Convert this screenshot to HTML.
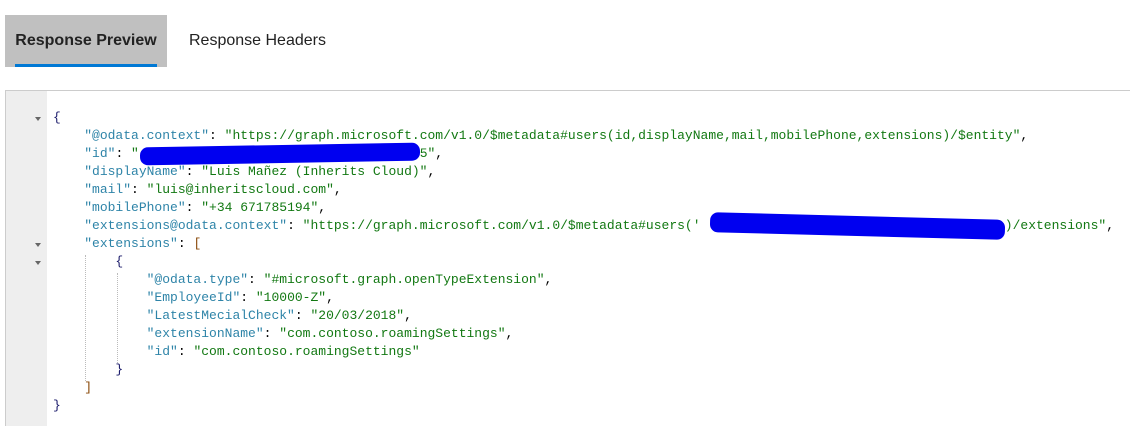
<!DOCTYPE html>
<html><head><meta charset="utf-8"><style>
body{margin:0;width:1130px;height:426px;background:#fff;overflow:hidden;position:relative;font-family:"Liberation Sans",sans-serif}
.tab{position:absolute;top:15px;height:52px;font-size:16px;line-height:52px;color:#222}
.t1{left:5px;width:162px;background:#c0c0c0;text-align:center}
.t1:after{content:"";position:absolute;left:10px;right:10px;bottom:0;height:3px;background:#0078d4}
.t2{left:189px}
.box{position:absolute;left:5px;top:90px;right:0;bottom:0;border-top:1px solid #ccc;border-left:1px solid #ccc}
.gut{position:absolute;left:6px;top:91px;width:41px;bottom:0;background:#eee}
.code{position:absolute;left:53px;top:109px;font-family:"Liberation Mono",monospace;font-size:13px;line-height:18px;white-space:pre;color:#000}
.k{color:#2e84a8}.s{color:#127812}.b{color:#8a4a0a}.c{color:#1a1a6a}
.ar{position:absolute;left:35px;width:0;height:0;border-left:3.5px solid transparent;border-right:3.5px solid transparent;border-top:4px solid #666}
.g{position:absolute;border-left:1px dotted #bbb;width:0}
.bl{position:absolute;background:#0000f0;border-radius:8px}
</style></head><body>
<div class="tab t1"><b style="font-weight:600">Response Preview</b></div>
<div class="tab t2">Response Headers</div>
<div class="box"></div><div class="gut"></div>
<div class="ar" style="top:117px"></div>
<div class="ar" style="top:243px"></div>
<div class="ar" style="top:261px"></div>
<div class="g" style="left:85px;top:255px;height:126px"></div>
<div class="g" style="left:117px;top:273px;height:90px"></div>
<div class="code"><span class="c">{</span>
    <span class="k">"@odata.context"</span>: <span class="s">"https://graph.microsoft.com/v1.0/$metadata#users(id,displayName,mail,mobilePhone,extensions)/$entity"</span>,
    <span class="k">"id"</span>: <span class="s">"                                    5"</span>,
    <span class="k">"displayName"</span>: <span class="s">"Luis Mañez (Inherits Cloud)"</span>,
    <span class="k">"mail"</span>: <span class="s">"luis@inheritscloud.com"</span>,
    <span class="k">"mobilePhone"</span>: <span class="s">"+34 671785194"</span>,
    <span class="k">"extensions@odata.context"</span>: <span class="s">"https://graph.microsoft.com/v1.0/$metadata#users('                                       )/extensions"</span>,
    <span class="k">"extensions"</span>: <span class="b">[</span>
        <span class="c">{</span>
            <span class="k">"@odata.type"</span>: <span class="s">"#microsoft.graph.openTypeExtension"</span>,
            <span class="k">"EmployeeId"</span>: <span class="s">"10000-Z"</span>,
            <span class="k">"LatestMecialCheck"</span>: <span class="s">"20/03/2018"</span>,
            <span class="k">"extensionName"</span>: <span class="s">"com.contoso.roamingSettings"</span>,
            <span class="k">"id"</span>: <span class="s">"com.contoso.roamingSettings"</span>
        <span class="c">}</span>
    <span class="b">]</span>
<span class="c">}</span></div>
<div class="bl" style="left:140px;top:145px;width:280px;height:18px;transform:rotate(-1deg)"></div>
<div class="bl" style="left:710px;top:216px;width:295px;height:20px;transform:rotate(1.5deg)"></div>
</body></html>
